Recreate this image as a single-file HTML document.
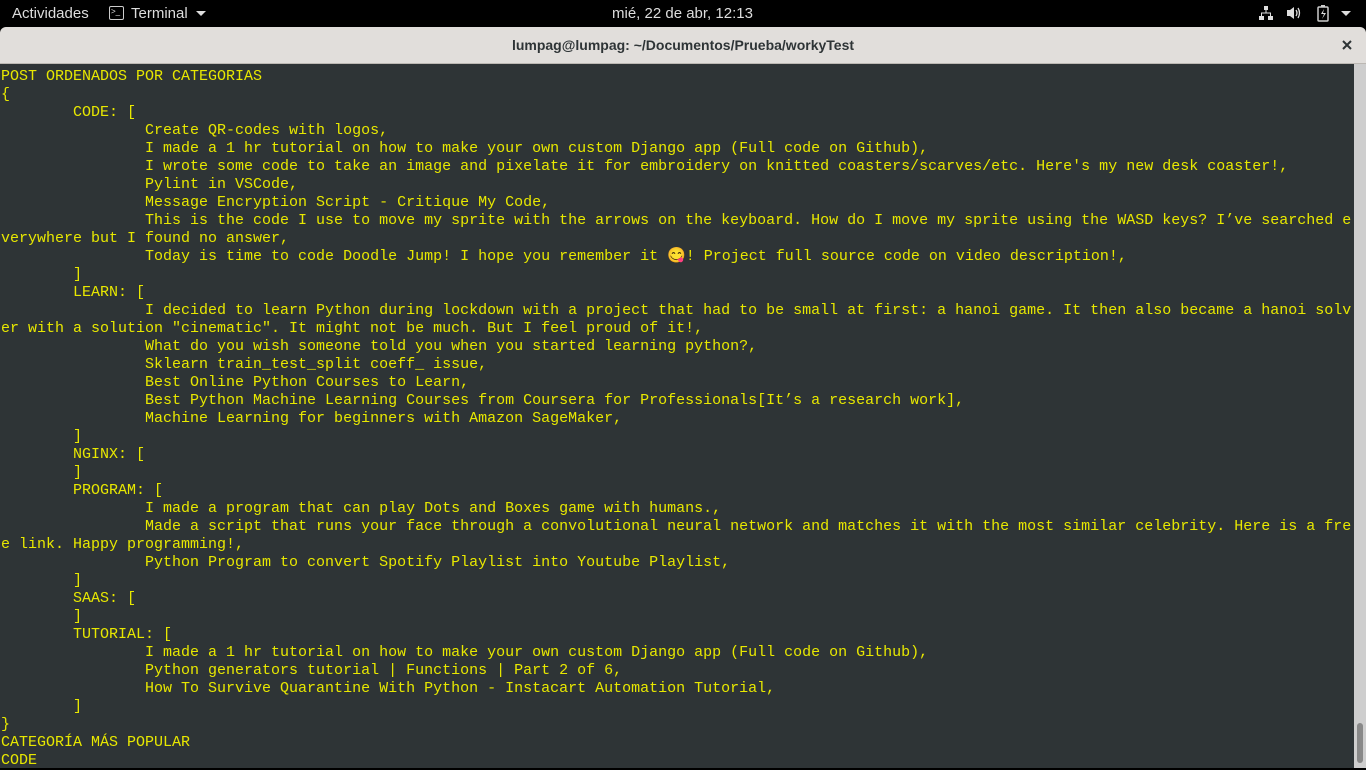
<!DOCTYPE html>
<html><head><meta charset="utf-8"><style>
html,body{margin:0;padding:0;width:1366px;height:768px;overflow:hidden;background:#000;font-family:"Liberation Sans","DejaVu Sans",sans-serif}
#top{position:absolute;left:0;top:0;width:1366px;height:27px;background:#000;color:#ddd;font-size:15px}
#title{position:absolute;left:0;top:27px;width:1366px;height:37px;background:#e1dedb;border-radius:6px 6px 0 0;border-bottom:1px solid #bcb8b3;box-sizing:border-box}
#term{position:absolute;left:0;top:64px;width:1354px;height:704px;background:#2e3436}
#sb{position:absolute;left:1354px;top:64px;width:12px;height:704px;background:#cecece}
#thumb{position:absolute;left:1357px;top:723px;width:6px;height:40px;background:#888;border-radius:3px}
pre{position:absolute;left:1px;top:68px;margin:0;font-family:"Liberation Mono","DejaVu Sans Mono",monospace;font-size:15px;line-height:18px;color:#e8e800;tab-size:8;white-space:pre}
</style></head><body>
<div id="top">
<span style="position:absolute;left:12px;top:5px">Actividades</span>
<span style="position:absolute;left:109px;top:6px;width:15px;height:14px;border:1.5px solid #ccc;border-radius:2px;box-sizing:border-box;font-size:8px;line-height:9px;padding-left:1px">&gt;_</span>
<span style="position:absolute;left:131px;top:5px">Terminal</span>
<span style="position:absolute;left:196px;top:11px;border:5px solid transparent;border-top-color:#ddd;border-bottom:0"></span>
<span style="position:absolute;left:612px;top:5px">mié, 22 de abr, 12:13</span>
<svg style="position:absolute;left:1258px;top:5px" width="16" height="16"><rect x="6" y="1" width="4" height="4" fill="#ddd"/><rect x="1" y="11" width="5" height="4" fill="#ddd"/><rect x="10" y="11" width="5" height="4" fill="#ddd"/><path d="M8 5v3M3.5 11V8h9v3" stroke="#ddd" fill="none"/></svg>
<svg style="position:absolute;left:1286px;top:5px" width="16" height="16"><path d="M1 5h3l4-3v12l-4-3H1z" fill="#ddd"/><path d="M10 5q2 3 0 6M12 3q3 5 0 10" stroke="#ddd" fill="none" stroke-width="1.3"/></svg>
<svg style="position:absolute;left:1316px;top:4px" width="14" height="18"><rect x="2" y="3" width="10" height="14" rx="1" stroke="#ccc" fill="none" stroke-width="1.5"/><rect x="5" y="1" width="4" height="2" fill="#ccc"/><path d="M8 5l-3 5h3l-2 5 4-6H7z" fill="#ddd"/></svg>
<span style="position:absolute;left:1341px;top:11px;border:5px solid transparent;border-top-color:#ddd;border-bottom:0"></span>
</div>
<div id="title">
<span style="position:absolute;left:0;width:1366px;text-align:center;top:10px;font-size:14px;font-weight:bold;color:#2e3436">lumpag@lumpag: ~/Documentos/Prueba/workyTest</span>
<svg style="position:absolute;left:1342px;top:13px" width="10" height="10"><path d="M1 1l8 8M9 1l-8 8" stroke="#2e3436" stroke-width="2"/></svg>
</div>
<div id="term"></div><div id="sb"></div><div id="thumb"></div>
<pre>POST ORDENADOS POR CATEGORIAS
{
	CODE: [
		Create QR-codes with logos,
		I made a 1 hr tutorial on how to make your own custom Django app (Full code on Github),
		I wrote some code to take an image and pixelate it for embroidery on knitted coasters/scarves/etc. Here's my new desk coaster!,
		Pylint in VSCode,
		Message Encryption Script - Critique My Code,
		This is the code I use to move my sprite with the arrows on the keyboard. How do I move my sprite using the WASD keys? I’ve searched e
verywhere but I found no answer,
		Today is time to code Doodle Jump! I hope you remember it 😋! Project full source code on video description!,
	]
	LEARN: [
		I decided to learn Python during lockdown with a project that had to be small at first: a hanoi game. It then also became a hanoi solv
er with a solution "cinematic". It might not be much. But I feel proud of it!,
		What do you wish someone told you when you started learning python?,
		Sklearn train_test_split coeff_ issue,
		Best Online Python Courses to Learn,
		Best Python Machine Learning Courses from Coursera for Professionals[It’s a research work],
		Machine Learning for beginners with Amazon SageMaker,
	]
	NGINX: [
	]
	PROGRAM: [
		I made a program that can play Dots and Boxes game with humans.,
		Made a script that runs your face through a convolutional neural network and matches it with the most similar celebrity. Here is a fre
e link. Happy programming!,
		Python Program to convert Spotify Playlist into Youtube Playlist,
	]
	SAAS: [
	]
	TUTORIAL: [
		I made a 1 hr tutorial on how to make your own custom Django app (Full code on Github),
		Python generators tutorial | Functions | Part 2 of 6,
		How To Survive Quarantine With Python - Instacart Automation Tutorial,
	]
}
CATEGORÍA MÁS POPULAR
CODE</pre>
</body></html>
